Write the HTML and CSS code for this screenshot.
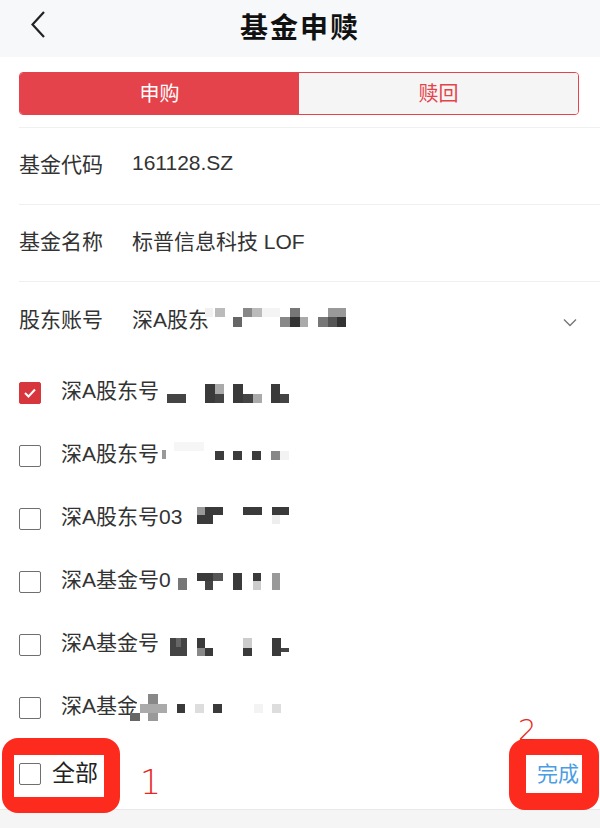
FILE: index.html
```html
<!DOCTYPE html>
<html lang="zh">
<head>
  <meta charset="utf-8">
  <title>基金申赎</title>
  <link rel="stylesheet" href="styles.css">
</head>
<body>
  <div class="nav">
    <svg class="back" width="16" height="30" viewBox="0 0 16 30"><polyline points="13,2 1.5,14.5 13,27" fill="none" stroke="#222" stroke-width="2.2"/></svg>
    <h1 class="nav-title">基金申赎</h1>
  </div>

  <div class="tabs">
    <div class="tab active">申购</div>
    <div class="tab">赎回</div>
  </div>

  <div class="form">
    <div class="row"><span class="label">基金代码</span><span class="value">161128.SZ</span></div>
    <div class="row"><span class="label">基金名称</span><span class="value">标普信息科技 LOF</span></div>
    <div class="row last">
      <span class="label">股东账号</span><span class="value">深A股东</span>
      <svg class="mosaic" width="600" height="79">
        <rect x="205" y="26" width="8" height="9" fill="#f1f1f1"/>
        <rect x="215" y="26" width="10" height="9" fill="#bbb"/>
        <rect x="233" y="35" width="9" height="10" fill="#666"/>
        <rect x="243" y="26" width="9" height="9" fill="#888"/>
        <rect x="252" y="26" width="10" height="9" fill="#bbb"/>
        <rect x="262" y="26" width="18" height="9" fill="#f4f4f4"/>
        <rect x="280" y="35" width="10" height="10" fill="#888"/>
        <rect x="290" y="26" width="10" height="9" fill="#777"/>
        <rect x="290" y="35" width="10" height="10" fill="#333"/>
        <rect x="300" y="35" width="8" height="10" fill="#aaa"/>
        <rect x="318" y="35" width="10" height="10" fill="#777"/>
        <rect x="328" y="26" width="9" height="9" fill="#999"/>
        <rect x="328" y="35" width="9" height="10" fill="#555"/>
        <rect x="337" y="26" width="9" height="9" fill="#999"/>
        <rect x="337" y="35" width="9" height="10" fill="#333"/>
      </svg>
      <svg class="chevron" width="14" height="9" viewBox="0 0 14 9"><polyline points="1,1.5 7,7.5 13,1.5" fill="none" stroke="#777" stroke-width="1.4"/></svg>
    </div>
  </div>

  <ul class="accounts">
    <li class="item">
      <span class="box checked"><svg width="14" height="12" viewBox="0 0 14 12"><polyline points="2,6 5.5,9.5 12,2.5" fill="none" stroke="#fff" stroke-width="2"/></svg></span>
      <span class="name">深A股东号</span>
      <svg class="mosaic" width="600" height="63">
        <rect x="167" y="33" width="19" height="9" fill="#444"/>
        <rect x="205" y="23" width="10" height="19" fill="#3a3a3a"/>
        <rect x="215" y="23" width="9" height="10" fill="#aaa"/>
        <rect x="215" y="33" width="9" height="9" fill="#444"/>
        <rect x="233" y="23" width="10" height="19" fill="#3a3a3a"/>
        <rect x="243" y="33" width="10" height="9" fill="#444"/>
        <rect x="253" y="33" width="9" height="9" fill="#aaa"/>
        <rect x="271" y="23" width="9" height="19" fill="#3a3a3a"/>
        <rect x="280" y="33" width="9" height="9" fill="#444"/>
      </svg>
    </li>
    <li class="item">
      <span class="box"></span>
      <span class="name">深A股东号</span>
      <svg class="mosaic" width="600" height="63">
        <rect x="162" y="18" width="12" height="18" fill="#fff"/>
        <rect x="162" y="26" width="4" height="9" fill="#999"/>
        <rect x="174" y="18" width="30" height="9" fill="#f6f6f6"/>
        <rect x="215" y="27" width="9" height="9" fill="#3c3c3c"/>
        <rect x="233" y="27" width="9" height="9" fill="#3c3c3c"/>
        <rect x="252" y="27" width="9" height="9" fill="#3c3c3c"/>
        <rect x="271" y="27" width="9" height="9" fill="#888"/>
        <rect x="280" y="27" width="9" height="9" fill="#f3f3f3"/>
      </svg>
    </li>
    <li class="item">
      <span class="box"></span>
      <span class="name">深A股东号03</span>
      <svg class="mosaic" width="600" height="63">
        <rect x="188" y="16" width="9" height="22" fill="#fff"/>
        <rect x="197" y="20" width="8" height="8" fill="#999"/>
        <rect x="197" y="28" width="16" height="9" fill="#3a3a3a"/>
        <rect x="205" y="20" width="18" height="8" fill="#3a3a3a"/>
        <rect x="243" y="20" width="19" height="8" fill="#3a3a3a"/>
        <rect x="272" y="20" width="17" height="8" fill="#3a3a3a"/>
        <rect x="272" y="28" width="8" height="9" fill="#eee"/>
      </svg>
    </li>
    <li class="item">
      <span class="box"></span>
      <span class="name">深A基金号0</span>
      <svg class="mosaic" width="600" height="63">
        <rect x="178" y="20" width="10" height="22" fill="#fff"/>
        <rect x="178" y="28" width="9" height="12" fill="#777"/>
        <rect x="197" y="23" width="26" height="8" fill="#3a3a3a"/>
        <rect x="213" y="23" width="10" height="8" fill="#555"/>
        <rect x="205" y="31" width="8" height="9" fill="#444"/>
        <rect x="233" y="23" width="9" height="17" fill="#3a3a3a"/>
        <rect x="253" y="23" width="8" height="8" fill="#3a3a3a"/>
        <rect x="253" y="31" width="8" height="9" fill="#ccc"/>
        <rect x="272" y="23" width="8" height="17" fill="#999"/>
      </svg>
    </li>
    <li class="item">
      <span class="box"></span>
      <span class="name">深A基金号</span>
      <svg class="mosaic" width="600" height="63">
        <rect x="170" y="25" width="17" height="18" fill="#444"/>
        <rect x="176" y="25" width="5" height="9" fill="#666"/>
        <rect x="197" y="25" width="8" height="10" fill="#3a3a3a"/>
        <rect x="197" y="35" width="8" height="8" fill="#888"/>
        <rect x="205" y="35" width="8" height="8" fill="#3a3a3a"/>
        <rect x="243" y="25" width="9" height="10" fill="#ccc"/>
        <rect x="243" y="35" width="9" height="8" fill="#3a3a3a"/>
        <rect x="272" y="25" width="9" height="18" fill="#3a3a3a"/>
        <rect x="281" y="35" width="8" height="4" fill="#444"/>
      </svg>
    </li>
    <li class="item">
      <span class="box"></span>
      <span class="name">深A基金</span>
      <svg class="mosaic" width="600" height="63">
        <rect x="137" y="14" width="40" height="34" fill="#fff"/>
        <rect x="148" y="18" width="10" height="10" fill="#888"/>
        <rect x="140" y="28" width="27" height="9" fill="#aaa"/>
        <rect x="130" y="37" width="10" height="8" fill="#666"/>
        <rect x="148" y="37" width="10" height="8" fill="#999"/>
        <rect x="177" y="28" width="8" height="9" fill="#3a3a3a"/>
        <rect x="195" y="28" width="9" height="9" fill="#ddd"/>
        <rect x="213" y="28" width="9" height="9" fill="#3a3a3a"/>
        <rect x="254" y="28" width="9" height="9" fill="#f3f3f3"/>
        <rect x="272" y="28" width="9" height="9" fill="#ddd"/>
      </svg>
    </li>
  </ul>

  <div class="bottom-bar">
    <label class="all"><span class="box"></span><span class="all-text">全部</span></label>
    <a class="done">完成</a>
  </div>
  <div class="footer"></div>

  <!-- annotations drawn on top of the screenshot -->
  <div class="mark mark-all"></div>
  <div class="mark mark-done"></div>
  <span class="note note-1">1</span>
  <span class="note note-2">2</span>
</body>
</html>
```

FILE: styles.css
```css
body {
  margin: 0;
  width: 600px;
  height: 828px;
  overflow: hidden;
  position: relative;
  background: #fff;
  color: #333;
  font-family: "Liberation Sans", "Noto Sans CJK SC", sans-serif;
}

.nav {
  height: 57px;
  background: #f7f8fa;
  display: flex;
  align-items: center;
  justify-content: center;
  position: relative;
}

.back {
  position: absolute;
  left: 31px;
  top: 10px;
}

.nav-title {
  margin: 0 0 6px;
  font-size: 28px;
  font-weight: bold;
  color: #111;
  letter-spacing: 2px;
}

.tabs {
  margin: 15px 21px 0 19px;
  height: 41px;
  display: flex;
  border: 1px solid #e5434b;
  border-radius: 4px;
  overflow: hidden;
}

.tab {
  flex: 1;
  display: flex;
  align-items: center;
  justify-content: center;
  padding-bottom: 3px;
  background: #f5f5f5;
  color: #e5434b;
  font-size: 20px;
}

.tab.active {
  background: #e5434b;
  color: #fff;
}

.form {
  margin-top: 12px;
  border-top: 1px solid #f0f0f0;
  margin-left: 19px;
}

.row {
  height: 76px;
  display: flex;
  align-items: center;
  border-bottom: 1px solid #efefef;
  font-size: 21px;
  position: relative;
}

.row.last {
  border-bottom: none;
  height: 79px;
}

.label,
.value {
  padding-bottom: 7px;
  color: #333;
}

.label {
  width: 113px;
}

.mosaic {
  position: absolute;
  left: 0;
  top: 0;
}

.row .mosaic {
  left: -19px;
}

.chevron {
  position: absolute;
  right: 23px;
  top: 36px;
}

.accounts {
  list-style: none;
  margin: 0;
  padding: 0;
}

.item {
  height: 63px;
  display: flex;
  align-items: center;
  padding-left: 19px;
  position: relative;
  font-size: 21px;
}

.box {
  width: 20px;
  height: 20px;
  border: 1.5px solid #6f6f6f;
  border-radius: 2px;
  display: inline-flex;
  align-items: center;
  justify-content: center;
  flex: none;
}

.box.checked {
  background: #d7363d;
  border-color: #d7363d;
}

.name {
  margin-left: 20px;
  padding-bottom: 7px;
  color: #333;
}

.bottom-bar {
  height: 70px;
  display: flex;
  align-items: center;
  justify-content: space-between;
  padding: 0 21px 0 19px;
}

.all {
  display: flex;
  align-items: center;
  font-size: 23px;
  color: #222;
}

.all .box {
  margin-right: 11px;
}

.all-text {
  padding-bottom: 6px;
}

.done {
  color: #4a9de3;
  font-size: 21px;
  padding-bottom: 5px;
}

.footer {
  height: 20px;
  background: #f5f5f5;
  border-top: 1px solid #e9e9e9;
}

.mark {
  position: absolute;
  border: solid #fd2a1e;
  border-radius: 16px;
}

.mark-all {
  left: 2px;
  top: 738px;
  width: 90px;
  height: 42px;
  border-width: 17px 16px 16px 12px;
}

.mark-done {
  left: 509px;
  top: 739px;
  width: 56px;
  height: 38px;
  border-width: 16px 17px 17px 17px;
}

.note {
  position: absolute;
  color: #e8261c;
  font-family: "DejaVu Sans", sans-serif;
  font-weight: 200;
  line-height: 1;
}

.note-1 {
  left: 140px;
  top: 766px;
  font-size: 33px;
}

.note-2 {
  left: 518px;
  top: 716px;
  font-size: 29px;
}
```
